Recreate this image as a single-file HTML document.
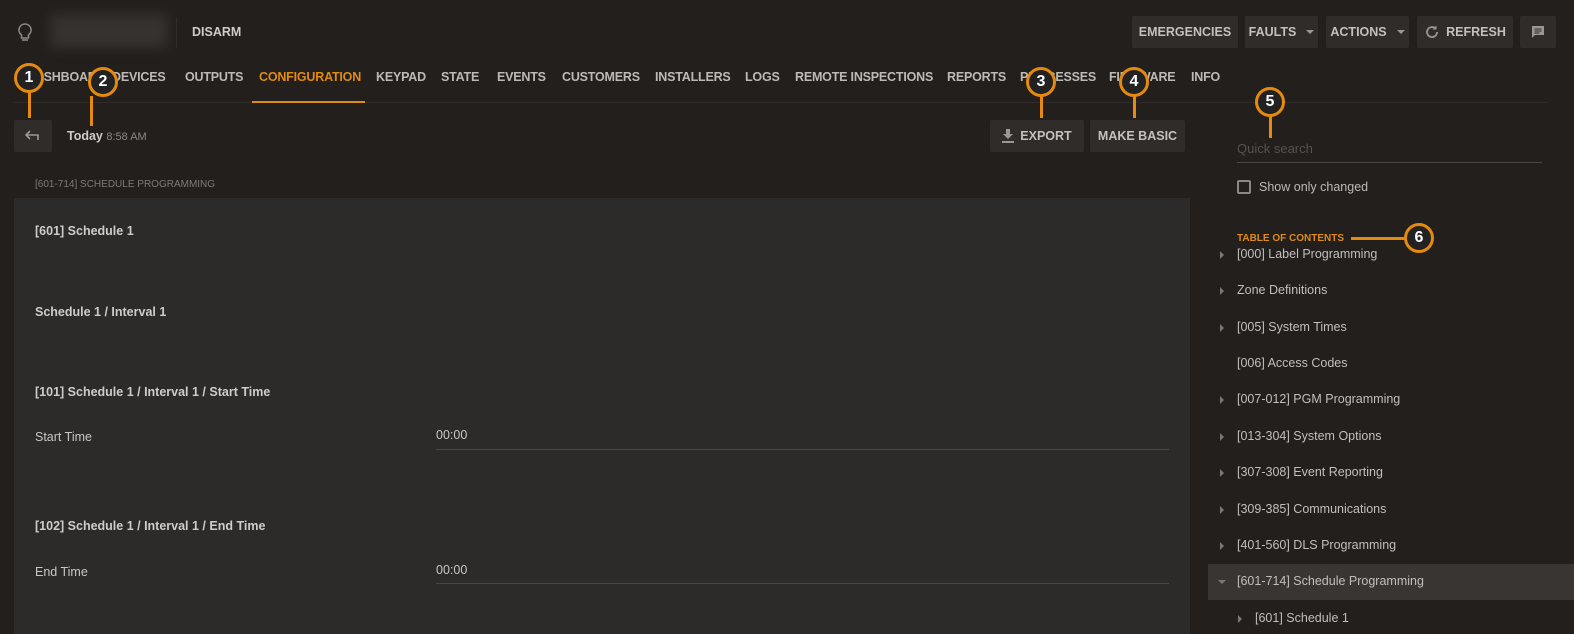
<!DOCTYPE html>
<html><head><style>
*{margin:0;padding:0;box-sizing:border-box}
body{width:1574px;height:634px;background:#221f1d;font-family:"Liberation Sans",sans-serif;color:#c9c7c4;position:relative;overflow:hidden}
.a{position:absolute;white-space:nowrap}
.nav{font-size:12.5px;font-weight:bold;color:#bdbab6;top:70px;letter-spacing:-0.2px}
.btn{position:absolute;background:#2f2c2a;border-radius:2px;font-size:12.5px;font-weight:bold;color:#c4c1bd;display:flex;align-items:center;justify-content:center;gap:6px}
.c{position:absolute;width:30px;height:30px;border:3px solid #e58a0e;border-radius:50%;background:#222;color:#fff;font-weight:bold;font-size:16px;display:flex;align-items:center;justify-content:center}
.l{position:absolute;background:#e58a0e}
.toc{position:absolute;left:1237px;font-size:12.5px;color:#c2bfbb}
.tri{position:absolute;left:1220px;width:0;height:0;border-top:4px solid transparent;border-bottom:4px solid transparent;border-left:4px solid #7a7774}
.car{display:inline-block;width:0;height:0;border-left:4px solid transparent;border-right:4px solid transparent;border-top:4px solid #9a9794;margin-left:4px}
.lab{font-size:12.5px;font-weight:bold;color:#cfccc8}
.ln{position:absolute;left:436px;width:733px;height:1px;background:#4a4846}
</style></head><body>
<svg class="a" style="left:17px;top:22px" width="16" height="22" viewBox="0 0 16 22"><path d="M8 2a6 6 0 0 0-3.5 10.9V16h7v-3.1A6 6 0 0 0 8 2z" fill="none" stroke="#8a8784" stroke-width="1.6"/><path d="M5 18h6" stroke="#8a8784" stroke-width="1.6"/></svg>
<div class="a" style="left:50px;top:14px;width:118px;height:34px;background:#3a3735;filter:blur(6px);opacity:.8"></div>
<div class="a" style="left:176px;top:18px;width:1px;height:30px;background:#2f2c2a"></div>
<div class="a lab" style="left:192px;top:25px">DISARM</div>

<div class="btn" style="left:1132px;top:16px;width:106px;height:32px">EMERGENCIES</div>
<div class="btn" style="left:1245px;top:16px;width:73px;height:32px">FAULTS<span class="car"></span></div>
<div class="btn" style="left:1326px;top:16px;width:83px;height:32px">ACTIONS<span class="car"></span></div>
<div class="btn" style="left:1417px;top:16px;width:96px;height:32px"><svg width="16" height="16" viewBox="0 0 16 16"><path d="M13 8a5 5 0 1 1-1.5-3.5" fill="none" stroke="#9a9794" stroke-width="1.8"/><path d="M12.5 1.5v4h-4z" fill="#9a9794"/></svg>REFRESH</div>
<div class="btn" style="left:1520px;top:16px;width:36px;height:32px"><svg width="14" height="14" viewBox="0 0 14 14"><path d="M1 1h12v9H4l-3 3z" fill="#9a9794"/><path d="M3.5 4h7M3.5 6h7M3.5 8h5" stroke="#2f2c2a" stroke-width="1"/></svg></div>

<div class="a nav" style="left:26px">DASHBOARD</div>
<div class="a nav" style="left:112px">DEVICES</div>
<div class="a nav" style="left:185px">OUTPUTS</div>
<div class="a nav" style="left:259px;color:#e08a16">CONFIGURATION</div>
<div class="a nav" style="left:376px">KEYPAD</div>
<div class="a nav" style="left:441px">STATE</div>
<div class="a nav" style="left:497px">EVENTS</div>
<div class="a nav" style="left:562px">CUSTOMERS</div>
<div class="a nav" style="left:655px">INSTALLERS</div>
<div class="a nav" style="left:745px">LOGS</div>
<div class="a nav" style="left:795px">REMOTE INSPECTIONS</div>
<div class="a nav" style="left:947px">REPORTS</div>
<div class="a nav" style="left:1020px">PROCESSES</div>
<div class="a nav" style="left:1109px">FIRMWARE</div>
<div class="a nav" style="left:1191px">INFO</div>
<div class="a" style="left:14px;top:102px;width:1534px;height:1px;background:#2e2b29"></div>
<div class="a" style="left:252px;top:101px;width:113px;height:2px;background:#e08a16"></div>

<div class="btn" style="left:14px;top:120px;width:38px;height:32px"><svg width="16" height="12" viewBox="0 0 16 12"><path d="M5 1L1 5l4 4M1 5h12v5" fill="none" stroke="#9a9794" stroke-width="1.6"/></svg></div>
<div class="a lab" style="left:67px;top:129px">Today <span style="font-weight:normal;font-size:11px;color:#8a8784">8:58 AM</span></div>
<div class="btn" style="left:990px;top:120px;width:94px;height:32px"><svg width="12" height="14" viewBox="0 0 12 14"><path d="M4 0h4v5h3L6 10 1 5h3z M0 12h12v2H0z" fill="#9a9794"/></svg>EXPORT</div>
<div class="btn" style="left:1090px;top:120px;width:95px;height:32px">MAKE BASIC</div>

<div class="a" style="left:35px;top:179px;font-size:10px;color:#7d7a77">[601-714] SCHEDULE PROGRAMMING</div>
<div class="a" style="left:14px;top:198px;width:1176px;height:436px;background:#2c2b2a"></div>
<div class="a lab" style="left:35px;top:224px">[601] Schedule 1</div>
<div class="a lab" style="left:35px;top:305px">Schedule 1 / Interval 1</div>
<div class="a lab" style="left:35px;top:385px">[101] Schedule 1 / Interval 1 / Start Time</div>
<div class="a" style="left:35px;top:430px;font-size:12.5px">Start Time</div>
<div class="a" style="left:436px;top:428px;font-size:12.5px">00:00</div>
<div class="ln" style="top:449px"></div>
<div class="a lab" style="left:35px;top:519px">[102] Schedule 1 / Interval 1 / End Time</div>
<div class="a" style="left:35px;top:565px;font-size:12.5px">End Time</div>
<div class="a" style="left:436px;top:563px;font-size:12.5px">00:00</div>
<div class="ln" style="top:583px"></div>

<div class="a" style="left:1237px;top:141px;font-size:13px;color:#55524f">Quick search</div>
<div class="a" style="left:1237px;top:162px;width:305px;height:1px;background:#4a4744"></div>
<div class="a" style="left:1237px;top:180px;width:14px;height:14px;border:2px solid #8a8784;border-radius:2px"></div>
<div class="a" style="left:1259px;top:180px;font-size:12.5px;color:#bdbab6">Show only changed</div>
<div class="a" style="left:1237px;top:233px;font-size:10px;font-weight:bold;color:#e08a16">TABLE OF CONTENTS</div>

<div class="a" style="left:1208px;top:564px;width:366px;height:36px;background:#383533"></div>
<div class="tri" style="top:251px"></div><div class="toc" style="top:247px">[000] Label Programming</div>
<div class="tri" style="top:287px"></div><div class="toc" style="top:283px">Zone Definitions</div>
<div class="tri" style="top:324px"></div><div class="toc" style="top:320px">[005] System Times</div>
<div class="toc" style="top:356px">[006] Access Codes</div>
<div class="tri" style="top:396px"></div><div class="toc" style="top:392px">[007-012] PGM Programming</div>
<div class="tri" style="top:433px"></div><div class="toc" style="top:429px">[013-304] System Options</div>
<div class="tri" style="top:469px"></div><div class="toc" style="top:465px">[307-308] Event Reporting</div>
<div class="tri" style="top:506px"></div><div class="toc" style="top:502px">[309-385] Communications</div>
<div class="tri" style="top:542px"></div><div class="toc" style="top:538px">[401-560] DLS Programming</div>
<div class="a" style="left:1218px;top:580px;border-left:4px solid transparent;border-right:4px solid transparent;border-top:4px solid #7a7774"></div><div class="toc" style="top:574px">[601-714] Schedule Programming</div>
<div class="tri" style="top:615px;left:1238px"></div><div class="toc" style="top:611px;left:1255px">[601] Schedule 1</div>

<div class="l" style="left:28px;top:92px;width:3px;height:26px"></div><div class="c" style="left:14px;top:63px">1</div>
<div class="l" style="left:90px;top:96px;width:3px;height:30px"></div><div class="c" style="left:88px;top:67px">2</div>
<div class="l" style="left:1040px;top:96px;width:3px;height:22px"></div><div class="c" style="left:1026px;top:67px">3</div>
<div class="l" style="left:1133px;top:96px;width:3px;height:22px"></div><div class="c" style="left:1119px;top:67px">4</div>
<div class="l" style="left:1269px;top:116px;width:3px;height:22px"></div><div class="c" style="left:1255px;top:87px">5</div>
<div class="l" style="left:1351px;top:237px;width:54px;height:3px"></div><div class="c" style="left:1404px;top:223px">6</div>
</body></html>
